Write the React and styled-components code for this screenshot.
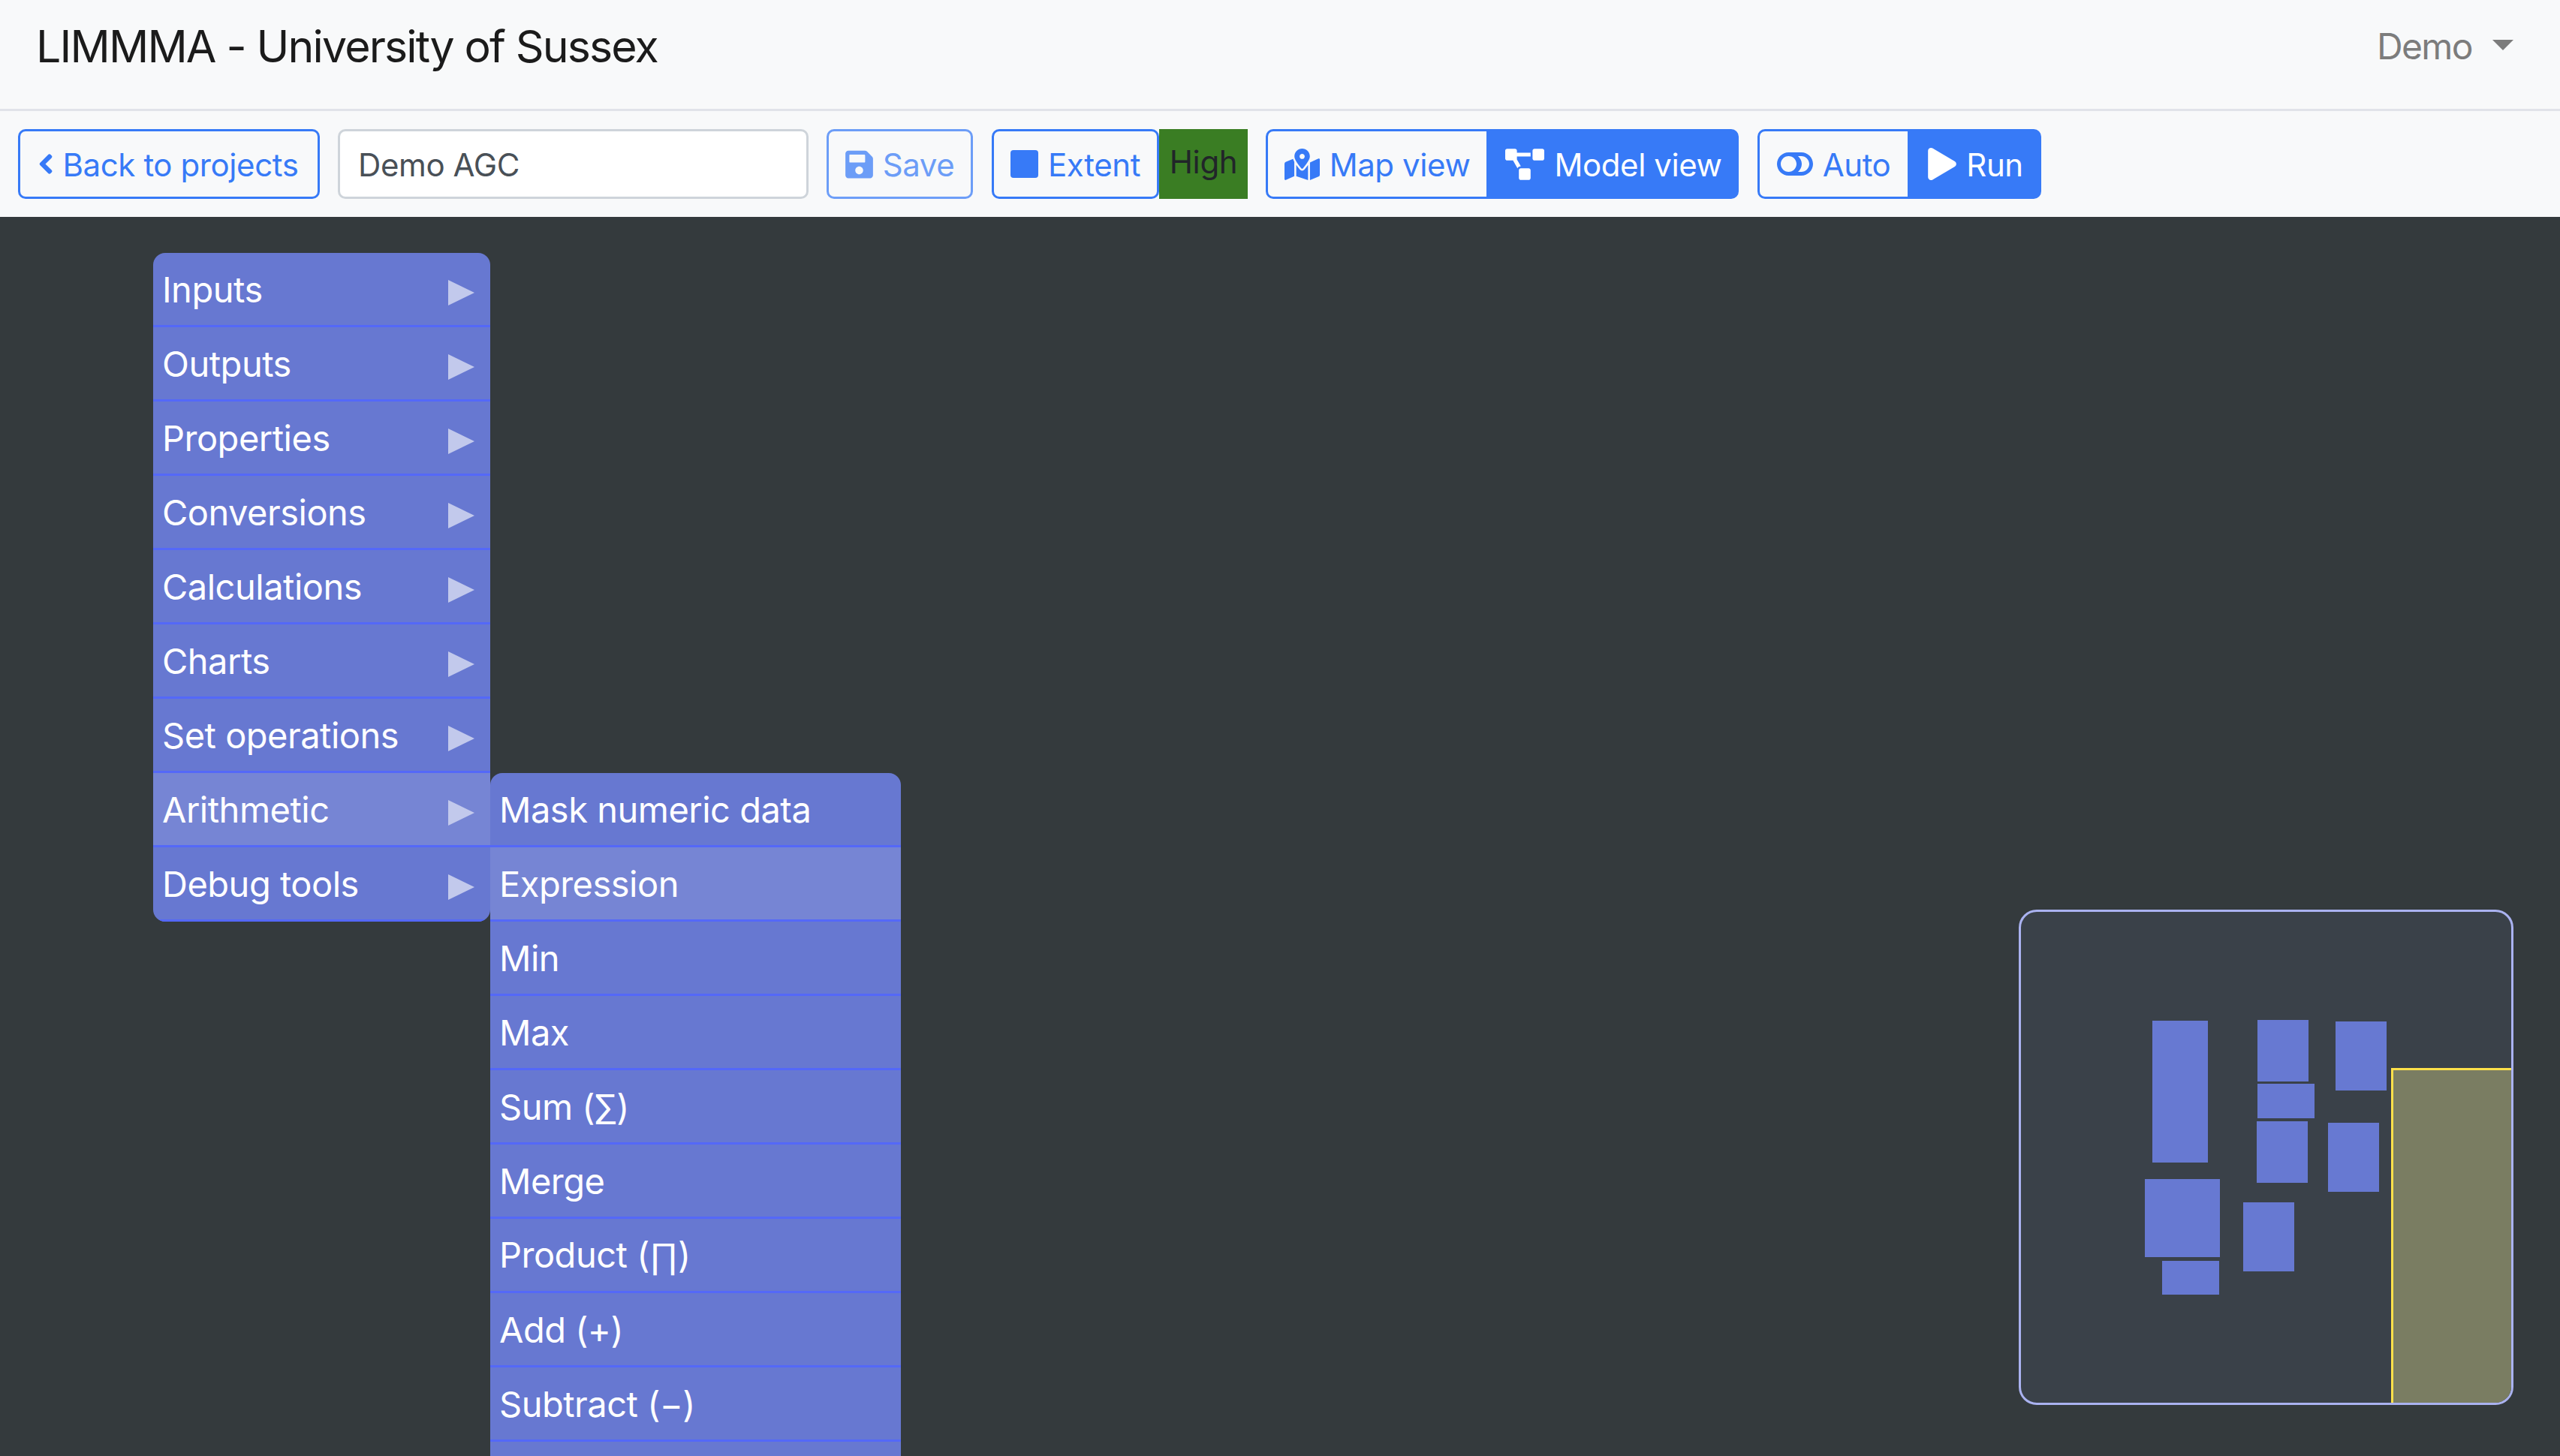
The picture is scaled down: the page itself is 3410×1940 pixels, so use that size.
import styled, { createGlobalStyle } from "styled-components";
import {
  FaChevronLeft,
  FaSave,
  FaMapMarkedAlt,
  FaProjectDiagram,
  FaPlay,
} from "react-icons/fa";

const blue = "#377af7";

const GlobalStyle = createGlobalStyle`
  * { box-sizing: border-box; }
  html, body { margin: 0; height: 100%; }
  body {
    background: #f8f9fa;
    color: #212529;
    font-family: Inter, "Liberation Sans", sans-serif;
    font-size: 42px;
    line-height: 1.5;
    letter-spacing: -0.4px;
  }
`;

const Page = styled.div`
  display: flex;
  flex-direction: column;
  height: 1940px;
  overflow: hidden;
`;

const Navbar = styled.header`
  height: 148px;
  flex: none;
  display: flex;
  align-items: center;
  justify-content: space-between;
  padding: 0 62px 21px 48px;
  border-bottom: 3px solid #e1e3e9;
`;

const Brand = styled.div`
  font-size: 59px;
  letter-spacing: -1.85px;
  color: #1b1b1b;
`;

const UserMenu = styled.div`
  display: flex;
  align-items: center;
  gap: 27px;
  color: #7c7c7c;
  font-size: 48px;
  letter-spacing: -1.6px;
`;

const Caret = styled.span`
  width: 0;
  height: 0;
  border-left: 14px solid transparent;
  border-right: 14px solid transparent;
  border-top: 14px solid #7c7c7c;
  margin-bottom: 4px;
`;

const Toolbar = styled.div`
  height: 141px;
  flex: none;
  display: flex;
  align-items: flex-start;
  padding: 24px 0 0 24px;
`;

const Button = styled.button`
  height: 93px;
  display: inline-flex;
  align-items: center;
  justify-content: center;
  gap: 13px;
  padding: 0;
  width: ${({ $width }) => $width}px;
  margin-right: ${({ $gap }) => $gap || 0}px;
  font: inherit;
  letter-spacing: inherit;
  color: ${({ $filled }) => ($filled ? "#fff" : blue)};
  background: ${({ $filled }) => ($filled ? blue : "transparent")};
  border: ${({ $filled }) => ($filled ? 0 : `3px solid ${blue}`)};
  border-radius: ${({ $radius }) => $radius || "10px"};
  opacity: ${({ $disabled }) => ($disabled ? 0.72 : 1)};
  svg {
    flex: none;
  }
`;

const Label = styled.span`
  padding-top: 2px;
`;

const BackIcon = styled(FaChevronLeft)`
  width: 18px;
  height: 29px;
  stroke-width: 30px;
`;

const SaveIcon = styled(FaSave)`
  width: 37px;
  height: 42px;
`;

const MapIcon = styled(FaMapMarkedAlt)`
  width: 47px;
  height: 42px;
`;

const ModelIcon = styled(FaProjectDiagram)`
  width: 52px;
  height: 42px;
`;

const PlayIcon = styled(FaPlay)`
  width: 38px;
  height: 43px;
`;

const NameInput = styled.input`
  width: 627px;
  height: 93px;
  margin: 0 24px;
  padding: 2px 24px 0;
  font: inherit;
  letter-spacing: inherit;
  color: #495057;
  background: #fff;
  border: 3px solid #ced4da;
  border-radius: 10px;
`;

const Quality = styled.div`
  width: 118px;
  height: 93px;
  display: flex;
  justify-content: center;
  padding-top: 11px;
  background: #3a7d23;
  color: #212529;
  margin-right: 24px;
  line-height: 66px;
`;

const Canvas = styled.main`
  position: relative;
  flex: 1;
  background: #343a3d;
`;

const Menu = styled.ul`
  position: absolute;
  left: ${({ $left }) => $left}px;
  top: ${({ $top }) => $top}px;
  width: ${({ $width }) => $width}px;
  margin: 0;
  padding: 0;
  list-style: none;
  background: #6778d1;
  border-radius: 16px;
  overflow: hidden;
`;

const MenuItem = styled.li`
  height: 99px;
  display: flex;
  align-items: center;
  justify-content: space-between;
  padding: 2px 21px 0 12px;
  color: #fff;
  font-size: 47px;
  letter-spacing: -0.5px;
  background: ${({ $active }) => ($active ? "#7685d4" : "transparent")};
  border-bottom: 3px solid #5468f8;
`;

const Arrow = styled.span`
  width: 0;
  height: 0;
  margin-top: 7px;
  border-left: 35px solid #c2c9ec;
  border-top: 17.5px solid transparent;
  border-bottom: 17.5px solid transparent;
`;

const MathGlyph = styled.span`
  font-family: "Liberation Sans", sans-serif;
`;

const Minimap = styled.div`
  position: absolute;
  left: 2689px;
  top: 923px;
  width: 659px;
  height: 660px;
  background: #3a4149;
  border: 3px solid #aab2f0;
  border-radius: 24px;
  overflow: hidden;
  svg {
    display: block;
  }
`;

const mainItems = [
  "Inputs",
  "Outputs",
  "Properties",
  "Conversions",
  "Calculations",
  "Charts",
  "Set operations",
  "Arithmetic",
  "Debug tools",
];

const arithmeticItems = [
  { id: "mask", label: "Mask numeric data" },
  { id: "expression", label: "Expression" },
  { id: "min", label: "Min" },
  { id: "max", label: "Max" },
  { id: "sum", label: "Sum (∑)" },
  { id: "merge", label: "Merge" },
  {
    id: "product",
    label: (
      <span>
        Product (<MathGlyph>∏</MathGlyph>)
      </span>
    ),
  },
  { id: "add", label: "Add (+)" },
  { id: "subtract", label: "Subtract (−)" },
  { id: "clipped" },
];

// x, y, w, h in page pixels
const nodes = [
  [2867, 1360, 74, 189],
  [3007, 1359, 68, 82],
  [3111, 1361, 68, 92],
  [3007, 1444, 76, 46],
  [3006, 1494, 68, 82],
  [3101, 1496, 68, 92],
  [2857, 1571, 100, 104],
  [2988, 1602, 68, 92],
  [2880, 1680, 76, 45],
];

const AutoIcon = () => (
  <svg width="48" height="31" viewBox="0 0 48 31">
    <path
      fill="currentColor"
      fillRule="evenodd"
      d="M15.5 0h17C41 0 48 7 48 15.5S41 31 32.5 31h-17C7 31 0 24 0 15.5S7 0 15.5 0Zm0 5C9.7 5 5 9.7 5 15.5S9.7 26 15.5 26 26 21.3 26 15.5 21.3 5 15.5 5ZM28 5c3 2.6 5 6.3 5 10.5S31 23.4 28 26h4.5C38 26 43 21.3 43 15.5S38 5 32.5 5Z"
    />
  </svg>
);

const StopIcon = () => (
  <svg width="37" height="37" viewBox="0 0 37 37">
    <rect width="37" height="37" rx="4" fill="currentColor" />
  </svg>
);

export default function App() {
  return (
    <Page>
      <GlobalStyle />
      <Navbar>
        <Brand>LIMMMA - University of Sussex</Brand>
        <UserMenu>
          Demo
          <Caret />
        </UserMenu>
      </Navbar>
      <Toolbar>
        <Button $width={402}>
          <BackIcon />
          <Label>Back to projects</Label>
        </Button>
        <NameInput defaultValue="Demo AGC" />
        <Button $width={195} $gap={25} $disabled>
          <SaveIcon />
          <Label>Save</Label>
        </Button>
        <Button $width={223}>
          <StopIcon />
          <Label>Extent</Label>
        </Button>
        <Quality>High</Quality>
        <Button $width={297} $radius="10px 0 0 10px">
          <MapIcon />
          <Label>Map view</Label>
        </Button>
        <Button $width={333} $filled $gap={25} $radius="0 10px 10px 0">
          <ModelIcon />
          <Label>Model view</Label>
        </Button>
        <Button $width={203} $radius="10px 0 0 10px">
          <AutoIcon />
          <Label>Auto</Label>
        </Button>
        <Button $width={175} $filled $radius="0 10px 10px 0">
          <PlayIcon />
          <Label>Run</Label>
        </Button>
      </Toolbar>
      <Canvas>
        <Menu $left={204} $top={48} $width={449}>
          {mainItems.map((item) => (
            <MenuItem key={item} $active={item === "Arithmetic"}>
              {item}
              <Arrow />
            </MenuItem>
          ))}
        </Menu>
        <Menu $left={653} $top={741} $width={547}>
          {arithmeticItems.map((item) => (
            <MenuItem key={item.id} $active={item.id === "expression"}>
              {item.label}
            </MenuItem>
          ))}
        </Menu>
        <Minimap>
          <svg width="653" height="654" viewBox="2692 1215 653 654">
            {nodes.map(([x, y, w, h]) => (
              <rect key={`${x}-${y}`} x={x} y={y} width={w} height={h} fill="#6779d2" />
            ))}
            <rect
              x="3186.5"
              y="1424.5"
              width="200"
              height="500"
              fill="#7a7d62"
              stroke="#ffe14a"
              strokeWidth="3"
            />
          </svg>
        </Minimap>
      </Canvas>
    </Page>
  );
}
